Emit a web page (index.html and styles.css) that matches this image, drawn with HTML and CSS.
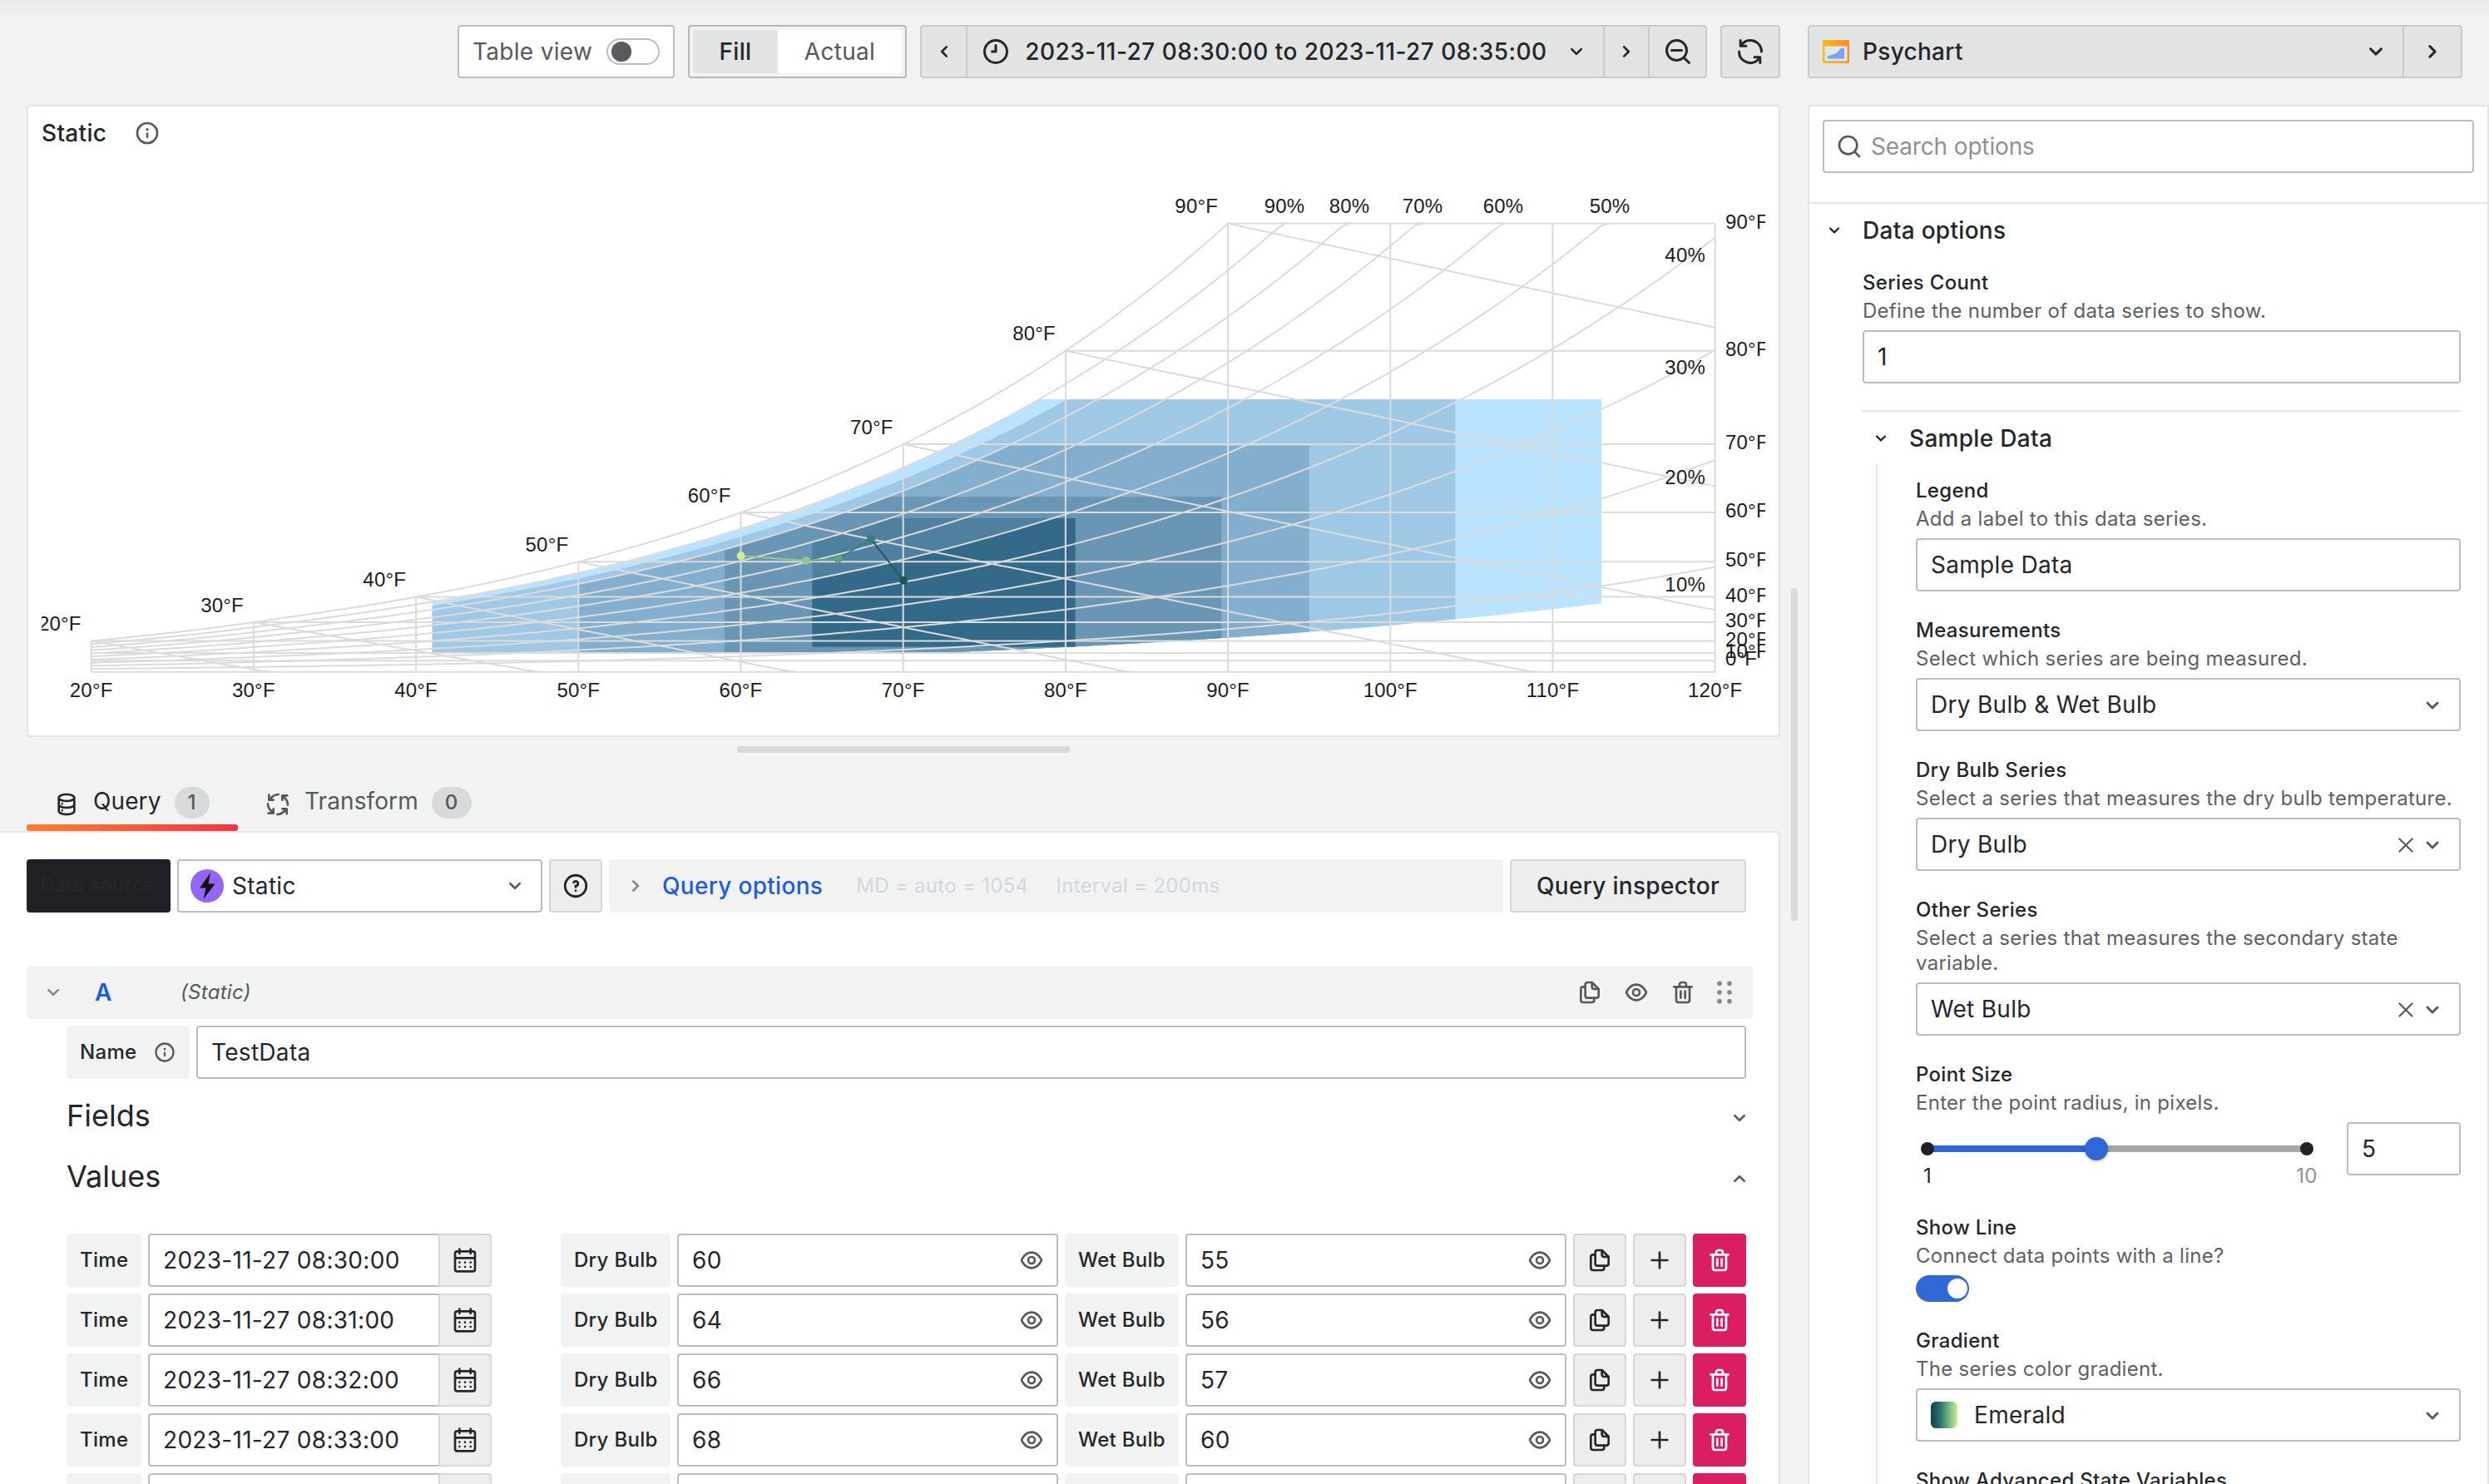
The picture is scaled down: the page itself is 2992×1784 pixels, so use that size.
FILE: index.html
```html
<!DOCTYPE html>
<html lang="en">
<head>
<meta charset="utf-8">
<title>Edit panel</title>
<link rel="stylesheet" href="styles.css">
</head>
<body>
<svg class="sprite" aria-hidden="true">
  <symbol id="down" viewBox="0 0 24 24"><path d="M17,9.17a1,1,0,0,0-1.41,0L12,12.71,8.46,9.17a1,1,0,0,0-1.41,0,1,1,0,0,0,0,1.42l4.24,4.24a1,1,0,0,0,1.42,0L17,10.59A1,1,0,0,0,17,9.17Z"/></symbol>
  <symbol id="right" viewBox="0 0 24 24"><path d="M14.83,11.29,10.59,7.05a1,1,0,0,0-1.42,0,1,1,0,0,0,0,1.41L12.71,12,9.17,15.54a1,1,0,0,0,0,1.41,1,1,0,0,0,.71.29,1,1,0,0,0,.71-.29l4.24-4.24A1,1,0,0,0,14.83,11.29Z"/></symbol>
  <symbol id="info" viewBox="0 0 24 24"><path d="M12,2A10,10,0,1,0,22,12,10,10,0,0,0,12,2Zm0,18a8,8,0,1,1,8-8A8,8,0,0,1,12,20Zm0-8.5a1,1,0,0,0-1,1v3a1,1,0,0,0,2,0v-3A1,1,0,0,0,12,11.5Zm0-4a1.25,1.25,0,1,0,1.25,1.25A1.25,1.25,0,0,0,12,7.5Z"/></symbol>
  <symbol id="clock" viewBox="0 0 24 24"><path d="M12,6a1,1,0,0,0-1,1v4H9a1,1,0,0,0,0,2h3a1,1,0,0,0,1-1V7A1,1,0,0,0,12,6Zm0-4A10,10,0,1,0,22,12,10,10,0,0,0,12,2Zm0,18a8,8,0,1,1,8-8A8,8,0,0,1,12,20Z"/></symbol>
  <symbol id="zoomout" viewBox="0 0 24 24"><path d="M21.71,20.29,18,16.61A9,9,0,1,0,16.61,18l3.68,3.68a1,1,0,0,0,1.42,0A1,1,0,0,0,21.71,20.29ZM11,18a7,7,0,1,1,7-7A7,7,0,0,1,11,18Zm4-8H7a1,1,0,0,0,0,2h8a1,1,0,0,0,0-2Z"/></symbol>
  <symbol id="search" viewBox="0 0 24 24"><path d="M21.71,20.29,18,16.61A9,9,0,1,0,16.61,18l3.68,3.68a1,1,0,0,0,1.42,0A1,1,0,0,0,21.71,20.29ZM11,18a7,7,0,1,1,7-7A7,7,0,0,1,11,18Z"/></symbol>
  <symbol id="sync" viewBox="0 0 24 24"><path d="M19.91,15.51H15.38a1,1,0,0,0,0,2h2.4A8,8,0,0,1,4,12a1,1,0,1,0-2,0,10,10,0,0,0,16.88,7.23V21a1,1,0,0,0,2,0V16.5A1,1,0,0,0,19.91,15.51ZM12,2A10,10,0,0,0,5.12,4.77V3a1,1,0,0,0-2,0V7.5a1,1,0,0,0,1,1h4.5a1,1,0,0,0,0-2H6.22A8,8,0,0,1,20,12a1,1,0,0,0,2,0A10,10,0,0,0,12,2Z"/></symbol>
  <symbol id="copy" viewBox="0 0 24 24"><path d="M21,8.94a1.31,1.31,0,0,0-.06-.27l0-.09a1.07,1.07,0,0,0-.19-.28h0l-6-6h0a1.07,1.07,0,0,0-.28-.19.32.32,0,0,0-.09,0A.88.88,0,0,0,14.05,2H10A3,3,0,0,0,7,5V6H6A3,3,0,0,0,3,9V19a3,3,0,0,0,3,3h8a3,3,0,0,0,3-3V18h1a3,3,0,0,0,3-3V9S21,9,21,8.94ZM15,5.41,17.59,8H16a1,1,0,0,1-1-1ZM15,19a1,1,0,0,1-1,1H6a1,1,0,0,1-1-1V9A1,1,0,0,1,6,8H7v7a3,3,0,0,0,3,3h5Zm4-4a1,1,0,0,1-1,1H10a1,1,0,0,1-1-1V5a1,1,0,0,1,1-1h3V7a3,3,0,0,0,3,3h3Z"/></symbol>
  <symbol id="eye" viewBox="0 0 24 24"><path d="M21.92,11.6C19.9,6.91,16.1,4,12,4S4.1,6.91,2.08,11.6a1,1,0,0,0,0,.8C4.1,17.09,7.9,20,12,20s7.9-2.91,9.92-7.6A1,1,0,0,0,21.92,11.6ZM12,18c-3.17,0-6.17-2.29-7.9-6C5.83,8.29,8.83,6,12,6s6.17,2.29,7.9,6C18.17,15.71,15.17,18,12,18ZM12,8a4,4,0,1,0,4,4A4,4,0,0,0,12,8Zm0,6a2,2,0,1,1,2-2A2,2,0,0,1,12,14Z"/></symbol>
  <symbol id="trash" viewBox="0 0 24 24"><path d="M10,18a1,1,0,0,0,1-1V11a1,1,0,0,0-2,0v6A1,1,0,0,0,10,18ZM20,6H16V5a3,3,0,0,0-3-3H11A3,3,0,0,0,8,5V6H4A1,1,0,0,0,4,8H5V19a3,3,0,0,0,3,3h8a3,3,0,0,0,3-3V8h1a1,1,0,0,0,0-2ZM10,5a1,1,0,0,1,1-1h2a1,1,0,0,1,1,1V6H10Zm7,14a1,1,0,0,1-1,1H8a1,1,0,0,1-1-1V8H17Zm-3-1a1,1,0,0,0,1-1V11a1,1,0,0,0-2,0v6A1,1,0,0,0,14,18Z"/></symbol>
  <symbol id="plus" viewBox="0 0 24 24"><path d="M19,11H13V5a1,1,0,0,0-2,0v6H5a1,1,0,0,0,0,2h6v6a1,1,0,0,0,2,0V13h6a1,1,0,0,0,0-2Z"/></symbol>
  <symbol id="calendar" viewBox="0 0 24 24"><path d="M12,19a1,1,0,1,0-1-1A1,1,0,0,0,12,19Zm5,0a1,1,0,1,0-1-1A1,1,0,0,0,17,19Zm0-4a1,1,0,1,0-1-1A1,1,0,0,0,17,15Zm-5,0a1,1,0,1,0-1-1A1,1,0,0,0,12,15ZM19,3H18V2a1,1,0,0,0-2,0V3H8V2A1,1,0,0,0,6,2V3H5A3,3,0,0,0,2,6V20a3,3,0,0,0,3,3H19a3,3,0,0,0,3-3V6A3,3,0,0,0,19,3Zm1,17a1,1,0,0,1-1,1H5a1,1,0,0,1-1-1V11H20ZM20,9H4V6A1,1,0,0,1,5,5H6V6A1,1,0,0,0,8,6V5h8V6a1,1,0,0,0,2,0V5h1a1,1,0,0,1,1,1ZM7,15a1,1,0,1,0-1-1A1,1,0,0,0,7,15Zm0,4a1,1,0,1,0-1-1A1,1,0,0,0,7,19Z"/></symbol>
  <symbol id="help" viewBox="0 0 24 24"><path d="M11.29,15.29a1.58,1.58,0,0,0-.12.15.76.76,0,0,0-.09.18.64.64,0,0,0-.06.18,1.36,1.36,0,0,0,0,.2.84.84,0,0,0,.08.38.9.9,0,0,0,.54.54.94.94,0,0,0,.76,0,.9.9,0,0,0,.54-.54A1,1,0,0,0,13,16a1,1,0,0,0-.29-.71A1,1,0,0,0,11.29,15.29ZM12,2A10,10,0,1,0,22,12,10,10,0,0,0,12,2Zm0,18a8,8,0,1,1,8-8A8,8,0,0,1,12,20ZM12,7A3,3,0,0,0,9.4,8.5a1,1,0,1,0,1.73,1A1,1,0,0,1,12,9a1,1,0,0,1,0,2,1,1,0,0,0-1,1v1a1,1,0,0,0,2,0v-.18A3,3,0,0,0,12,7Z"/></symbol>
  <symbol id="times" viewBox="0 0 24 24"><path d="M13.41,12l6.3-6.29a1,1,0,1,0-1.42-1.42L12,10.59,5.71,4.29A1,1,0,0,0,4.29,5.71L10.59,12l-6.3,6.29a1,1,0,0,0,0,1.42,1,1,0,0,0,1.42,0L12,13.41l6.29,6.3a1,1,0,0,0,1.42,0,1,1,0,0,0,0-1.42Z"/></symbol>
  <symbol id="database" viewBox="0 0 24 24"><path d="M8,16.5a1,1,0,1,0,1,1A1,1,0,0,0,8,16.5ZM12,2C8,2,4,3.37,4,6V18c0,2.63,4,4,8,4s8-1.37,8-4V6C20,3.37,16,2,12,2Zm6,16c0,.71-2.28,2-6,2s-6-1.29-6-2V14.73A13.16,13.16,0,0,0,12,16a13.16,13.16,0,0,0,6-1.27Zm0-6c0,.71-2.28,2-6,2s-6-1.29-6-2V8.73A13.16,13.16,0,0,0,12,10a13.16,13.16,0,0,0,6-1.27ZM12,8C8.28,8,6,6.71,6,6s2.28-2,6-2,6,1.29,6,2S15.72,8,12,8ZM8,10.5a1,1,0,1,0,1,1A1,1,0,0,0,8,10.5Z"/></symbol>
  <symbol id="process" viewBox="0 0 24 24"><g fill="none" stroke="currentColor" stroke-width="2" stroke-linecap="round" stroke-linejoin="round"><path d="M12.500 3C9.500 3.100 7 4.600 5 7.200M4 3.500V8H8"/><path transform="rotate(90 12 12)" d="M12.500 3C9.500 3.100 7 4.600 5 7.200M4 3.500V8H8"/><path transform="rotate(180 12 12)" d="M12.500 3C9.500 3.100 7 4.600 5 7.200M4 3.500V8H8"/><path transform="rotate(270 12 12)" d="M12.500 3C9.500 3.100 7 4.600 5 7.200M4 3.500V8H8"/></g></symbol>
  <symbol id="grip" viewBox="0 0 24 24"><circle cx="7.5" cy="4" r="2.1"/><circle cx="16.5" cy="4" r="2.1"/><circle cx="7.5" cy="12" r="2.1"/><circle cx="16.5" cy="12" r="2.1"/><circle cx="7.5" cy="20" r="2.1"/><circle cx="16.5" cy="20" r="2.1"/></symbol>
</svg>

<div class="top-shadow"></div>
<div class="page">
  <main class="left">
    <div class="toolbar">
      <div class="table-view"><span>Table view</span><span class="switch-off"><i></i></span></div>
      <div class="radio"><span class="on">Fill</span><span class="off">Actual</span></div>
      <div class="btn-group">
        <div class="seg seg-prev"><svg class="i32 flip"><use href="#right"/></svg></div>
        <div class="seg seg-time"><svg class="i36"><use href="#clock"/></svg><span>2023-11-27 08:30:00 to 2023-11-27 08:35:00</span><svg class="i32"><use href="#down"/></svg></div>
        <div class="seg seg-next"><svg class="i32"><use href="#right"/></svg></div>
        <div class="seg seg-zoom"><svg class="i36"><use href="#zoomout"/></svg></div>
      </div>
      <div class="btn-group refresh"><svg class="i36"><use href="#sync"/></svg></div>
    </div>

    <section class="panel">
      <header class="panel-title"><h2>Static</h2><svg class="i32"><use href="#info"/></svg></header>
      <svg class="chart" id="chart" viewBox="50 194 2072 690" width="2072" height="690"></svg>
    </section>

    <div class="splitter"><span></span></div>

    <nav class="tabs">
      <div class="tab active"><svg class="i32"><use href="#database"/></svg><span>Query</span><b>1</b></div>
      <div class="tab"><svg class="i32"><use href="#process"/></svg><span>Transform</span><b>0</b></div>
    </nav>

    <section class="query">
      <div class="source-row">
        <div class="source-label">Data source</div>
        <div class="source-select">
          <svg class="bolt" viewBox="0 0 40 40"><circle cx="20" cy="20" r="20" fill="#9466f8"/><path d="M24 4 11 22.5h7.5L15.5 36 29.500 17.500H21.500Z" fill="#111217"/></svg>
          <span>Static</span><svg class="i32 muted"><use href="#down"/></svg>
        </div>
        <div class="sq"><svg class="i34"><use href="#help"/></svg></div>
        <div class="query-options"><svg class="i32 faint"><use href="#right"/></svg><a>Query options</a><small class="md">MD = auto = 1054</small><small>Interval = 200ms</small></div>
        <div class="inspector">Query inspector</div>
      </div>

      <div class="query-head">
        <svg class="i32 faint"><use href="#down"/></svg><b>A</b><em>(Static)</em>
        <div class="actions"><svg class="i32"><use href="#copy"/></svg><svg class="i32"><use href="#eye"/></svg><svg class="i32"><use href="#trash"/></svg><svg class="i32 grip"><use href="#grip"/></svg></div>
      </div>

      <div class="query-body">
        <div class="name-row"><div class="tag tag-name">Name<svg class="i28"><use href="#info"/></svg></div><div class="input grow">TestData</div></div>
        <div class="fold"><h3>Fields</h3><svg class="i32"><use href="#down"/></svg></div>
        <div class="fold fold-values"><h3>Values</h3><svg class="i32 up"><use href="#down"/></svg></div>
        <div class="rows">
          <div class="row"><div class="tag tag-time">Time</div><div class="input time">2023-11-27 08:30:00</div><div class="sq cal"><svg class="i32"><use href="#calendar"/></svg></div><div class="tag tag-dry">Dry Bulb</div><div class="input val">60<svg class="i32"><use href="#eye"/></svg></div><div class="tag tag-wet">Wet Bulb</div><div class="input val">55<svg class="i32"><use href="#eye"/></svg></div><div class="sq"><svg class="i32"><use href="#copy"/></svg></div><div class="sq"><svg class="i32"><use href="#plus"/></svg></div><div class="sq danger"><svg class="i32"><use href="#trash"/></svg></div></div>
          <div class="row"><div class="tag tag-time">Time</div><div class="input time">2023-11-27 08:31:00</div><div class="sq cal"><svg class="i32"><use href="#calendar"/></svg></div><div class="tag tag-dry">Dry Bulb</div><div class="input val">64<svg class="i32"><use href="#eye"/></svg></div><div class="tag tag-wet">Wet Bulb</div><div class="input val">56<svg class="i32"><use href="#eye"/></svg></div><div class="sq"><svg class="i32"><use href="#copy"/></svg></div><div class="sq"><svg class="i32"><use href="#plus"/></svg></div><div class="sq danger"><svg class="i32"><use href="#trash"/></svg></div></div>
          <div class="row"><div class="tag tag-time">Time</div><div class="input time">2023-11-27 08:32:00</div><div class="sq cal"><svg class="i32"><use href="#calendar"/></svg></div><div class="tag tag-dry">Dry Bulb</div><div class="input val">66<svg class="i32"><use href="#eye"/></svg></div><div class="tag tag-wet">Wet Bulb</div><div class="input val">57<svg class="i32"><use href="#eye"/></svg></div><div class="sq"><svg class="i32"><use href="#copy"/></svg></div><div class="sq"><svg class="i32"><use href="#plus"/></svg></div><div class="sq danger"><svg class="i32"><use href="#trash"/></svg></div></div>
          <div class="row"><div class="tag tag-time">Time</div><div class="input time">2023-11-27 08:33:00</div><div class="sq cal"><svg class="i32"><use href="#calendar"/></svg></div><div class="tag tag-dry">Dry Bulb</div><div class="input val">68<svg class="i32"><use href="#eye"/></svg></div><div class="tag tag-wet">Wet Bulb</div><div class="input val">60<svg class="i32"><use href="#eye"/></svg></div><div class="sq"><svg class="i32"><use href="#copy"/></svg></div><div class="sq"><svg class="i32"><use href="#plus"/></svg></div><div class="sq danger"><svg class="i32"><use href="#trash"/></svg></div></div>
          <div class="row"><div class="tag tag-time"></div><div class="input time"></div><div class="sq cal"></div><div class="tag tag-dry"></div><div class="input val"></div><div class="tag tag-wet"></div><div class="input val"></div><div class="sq"></div><div class="sq"></div><div class="sq danger"></div></div>
        </div>
      </div>
    </section>
  </main>

  <div class="gutter"><span></span></div>

  <aside class="right">
    <div class="viz-picker">
      <div class="viz-name">
        <svg class="viz-icon" viewBox="0 0 32 28"><defs><linearGradient id="og"><stop offset="0" stop-color="#f2c015"/><stop offset="1" stop-color="#ff8b2b"/></linearGradient></defs><rect width="32" height="28" rx="1.500" fill="url(#og)"/><path d="M2.500 7.500h27v18h-27Z" fill="#e3e5e8"/><path d="M5.500 22.500v-3C14 18 19 15 21.500 10h4.500v12.500Z" fill="#79a6f2"/></svg>
        <span>Psychart</span><svg class="i36"><use href="#down"/></svg>
      </div>
      <div class="viz-next"><svg class="i36"><use href="#right"/></svg></div>
    </div>
    <div class="options">
      <div class="search-wrap"><div class="search"><svg class="i32"><use href="#search"/></svg><span>Search options</span></div></div>
      <div class="category"><svg class="i28"><use href="#down"/></svg><h4>Data options</h4></div>
      <div class="field field-count"><label>Series Count</label><p>Define the number of data series to show.</p><div class="input">1</div></div>
      <div class="nested">
        <div class="category sub"><svg class="i28"><use href="#down"/></svg><h4>Sample Data</h4></div>
        <div class="nested-body">
          <div class="field"><label>Legend</label><p>Add a label to this data series.</p><div class="input">Sample Data</div></div>
          <div class="field"><label>Measurements</label><p>Select which series are being measured.</p><div class="input">Dry Bulb &amp; Wet Bulb<svg class="i34 chev"><use href="#down"/></svg></div></div>
          <div class="field"><label>Dry Bulb Series</label><p>Select a series that measures the dry bulb temperature.</p><div class="input">Dry Bulb<svg class="i26"><use href="#times"/></svg><svg class="i34 chev"><use href="#down"/></svg></div></div>
          <div class="field"><label>Other Series</label><p>Select a series that measures the secondary state variable.</p><div class="input">Wet Bulb<svg class="i26"><use href="#times"/></svg><svg class="i34 chev"><use href="#down"/></svg></div></div>
          <div class="field"><label>Point Size</label><p>Enter the point radius, in pixels.</p>
            <div class="slider-row">
              <svg class="slider" width="488" height="80" viewBox="0 0 488 80"><rect x="14" y="28" width="456" height="8" rx="4" fill="#a6a7a9"/><rect x="14" y="28" width="204" height="8" fill="#3267d6"/><circle cx="14" cy="32" r="8" fill="#202226"/><circle cx="470" cy="32" r="8" fill="#202226"/><circle class="handle" cx="217" cy="32" r="14" fill="#3267d6"/><text x="14" y="73" fill="#24262b">1</text><text x="470" y="73" fill="#8f9194">10</text></svg>
              <div class="input size">5</div>
            </div>
          </div>
          <div class="field"><label>Show Line</label><p>Connect data points with a line?</p><div class="switch-on"><i></i></div></div>
          <div class="field"><label>Gradient</label><p>The series color gradient.</p><div class="input"><span class="swatch"></span>Emerald<svg class="i34 chev"><use href="#down"/></svg></div></div>
          <div class="field"><label>Show Advanced State Variables</label></div>
        </div>
      </div>
    </div>
  </aside>
</div>
<script src="chart.js"></script>
</body>
</html>
```
FILE: styles.css
```css
* { box-sizing: border-box; }
html, body { margin: 0; width: 2992px; height: 1784px; overflow: hidden; }
body {
  background: #f1f3f3;
  color: #24262b;
  font: 400 28px/44px Inter, "Liberation Sans", sans-serif;
  letter-spacing: 0.3px;
}
h2, h3, h4, p { margin: 0; font-weight: 500; }
svg { display: block; flex: none; fill: currentColor; }
.sprite { position: absolute; width: 0; height: 0; }
.i26 { width: 26px; height: 26px; }
.i28 { width: 28px; height: 28px; }
.i32 { width: 32px; height: 32px; }
.i34 { width: 34px; height: 34px; }
.i36 { width: 36px; height: 36px; }
.flip { transform: scaleX(-1); }
.up { transform: scaleY(-1); }
.muted { color: #55585c; }
.faint { color: #85878b; }

.top-shadow {
  position: absolute;
  inset: 0 0 auto;
  height: 24px;
  background: linear-gradient(#e8eaea, #eceeee 35%, #f1f3f3);
}
.page {
  position: relative;
  display: grid;
  grid-template-columns: 2140px 33px 819px;
  height: 1784px;
}
.left { display: flex; flex-direction: column; min-width: 0; }

/* toolbar */
.toolbar {
  display: flex;
  justify-content: flex-end;
  gap: 16px;
  height: 126px;
  padding-top: 30px;
  flex: none;
}
.toolbar > div { height: 64px; border-radius: 4px; display: flex; align-items: center; }
.table-view {
  width: 261px;
  padding: 0 16px;
  justify-content: space-between;
  background: #fff;
  border: 2px solid #bcbdbd;
  color: #55585c;
}
.switch-off { width: 64px; height: 32px; border: 2px solid #bcbdbd; border-radius: 16px; padding: 2px 4px; background: #fff; }
.switch-off i { display: block; width: 24px; height: 24px; border-radius: 50%; background: #575a5e; box-shadow: 0 1px 2px #0003; }
.radio { width: 263px; padding: 4px; border: 2px solid #b6b7b7; }
.radio span { height: 52px; line-height: 52px; text-align: center; border-radius: 3px; }
.radio .on { width: 102px; background: #e2e4e4; font-weight: 500; }
.radio .off { flex: 1; background: #fff; color: #55585c; }
.btn-group, .viz-picker { background: #e2e4e4; border: 2px solid #c9cbcb; font-weight: 500; }
.seg { height: 60px; display: flex; align-items: center; justify-content: center; border-right: 2px solid #c9cbcb; }
.seg-prev { width: 55px; }
.seg-time { width: 766px; padding: 0 16px; justify-content: space-between; }
.seg-time span { letter-spacing: 0.47px; position: relative; left: -1px; }
.seg-next { width: 54px; }
.seg-zoom { width: 67px; border-right: 0; }
.refresh { width: 72px; justify-content: center; }

/* visualization panel */
.panel {
  flex: none;
  margin-left: 32px;
  height: 760px;
  background: #fff;
  border: 2px solid #e3e5e5;
  border-radius: 4px;
}
.panel-title { display: flex; align-items: center; height: 66px; padding: 0 0 2px 16px; gap: 33px; }
.panel-title svg { color: #55585c; }
.panel-title h2 { font-size: 28px; }
.chart { margin-left: 16px; }
.chart text { font: 24px "Liberation Sans", sans-serif; letter-spacing: 0.2px; fill: #1c1c1c; }

.splitter { height: 50px; padding: 11px 0 0 854px; flex: none; margin-left: 32px; }
.splitter span { display: block; width: 400px; height: 8px; border-radius: 3px; background: #d7d9da; }

/* tabs */
.tabs { display: flex; height: 63px; padding-left: 32px; flex: none; }
.tab { display: flex; align-items: center; height: 63px; padding: 0 33px 4px 32px; gap: 16px; color: #55585c; position: relative; }
.tab svg { position: relative; top: 1px; }
.tab span { position: relative; top: -3px; letter-spacing: 0.1px; }
.tab b { height: 38px; line-height: 38px; padding: 0 16px; border-radius: 19px; background: #d7d9da; font-size: 24px; font-weight: 500; color: #55585c; position: relative; top: -1px; }
.tab.active { width: 254px; padding-right: 0; color: #24262b; }
.tab.active::after { content: ""; position: absolute; left: 0; right: 0; bottom: 0; height: 8px; border-radius: 3px; background: linear-gradient(90deg, #ff8030, #f23545); }

/* query editor */
.query {
  flex: 1;
  min-height: 0;
  background: #fff;
  border: 2px solid #e3e5e5;
  border-width: 2px 2px 0 0;
  border-radius: 0 5px 0 0;
  padding: 32px 32px 0;
}
.source-row { display: flex; gap: 8px; height: 64px; width: 2067px; }
.source-label { width: 173px; padding-left: 16px; line-height: 62px; border-radius: 4px; background: #202127; color: #25262c; font-size: 24px; font-weight: 500; white-space: nowrap; letter-spacing: 0; }
.source-select { width: 439px; display: flex; align-items: center; border: 2px solid #bcbdbd; border-radius: 4px; padding: 0 15px 0 14px; }
.source-select span { flex: 1; margin-left: 10px; }
.bolt { width: 40px; height: 40px; }
.sq { width: 64px; height: 64px; flex: none; display: flex; align-items: center; justify-content: center; background: #ededee; border: 2px solid #d5d6d7; border-radius: 4px; }
.query-options { flex: 1; display: flex; align-items: center; padding-left: 16px; background: #f1f3f3; border-radius: 4px; }
.query-options a { color: #1f5bdb; font-weight: 500; margin-left: 16px; }
.query-options small { font-size: 24px; color: #d4d5e2; margin-left: 33px; letter-spacing: 0.3px; }
.query-options .md { margin-left: 40px; }
.inspector { width: 284px; text-align: center; line-height: 60px; background: #ededee; border: 2px solid #d5d6d7; border-radius: 4px; font-weight: 500; }
.query-head { display: flex; align-items: center; width: 2075px; height: 64px; margin-top: 64px; padding: 0 18px 0 16px; background: #f1f3f3; border-radius: 4px; }
.query-head b { width: 103px; margin-left: 34px; color: #1f5bdb; font-weight: 600; }
.query-head em { font-size: 24px; color: #55585c; }
.actions { display: flex; gap: 24px; margin-left: auto; color: #55585c; }
.actions .grip { color: #85878b; margin-left: -6px; }
.query-body { width: 2019px; margin: 8px 0 0 48px; }
.name-row { display: flex; gap: 8px; }
.tag { height: 64px; flex: none; padding: 0 16px; background: #f1f3f3; border-radius: 4px; font-size: 24px; font-weight: 500; line-height: 64px; white-space: nowrap; }
.tag-name { width: 148px; display: flex; align-items: center; justify-content: space-between; line-height: 62px; }
.tag-name svg { color: #55585c; }
.input { height: 64px; border: 2px solid #bcbdbd; border-radius: 4px; background: #fff; padding: 0 16px; display: flex; align-items: center; }
.grow { flex: 1; }
.fold { display: flex; justify-content: space-between; align-items: center; height: 44px; margin: 22px -8px 0 0; color: #55585c; }
.fold svg { position: relative; top: 3px; }
.fold h3 { font-size: 36px; font-weight: 400; color: #24262b; letter-spacing: 0; }
.fold-values { margin-top: 29px; }
.rows { margin-top: 47px; display: flex; flex-direction: column; gap: 8px; }
.row { display: flex; gap: 8px; }
.tag-time { width: 90px; }
.tag-dry { width: 132px; }
.tag-wet { width: 137px; }
.time { width: 350px; border-radius: 4px 0 0 4px; border-right: 0; }
.cal { margin: 0 75px 0 -9px; border-radius: 0 4px 4px 0; }
.val { width: 458px; justify-content: space-between; padding-right: 14px; }
.val svg { color: #55585c; }
.danger { background: #db1e64; border-color: #db1e64; color: #fff; }

.gutter { padding: 707px 0 0 13px; }
.gutter span { display: block; width: 8px; height: 400px; border-radius: 4px; background: #d9dbdb; }

/* options pane */
.right { display: flex; flex-direction: column; min-width: 0; }
.viz-picker { display: flex; width: 787px; height: 64px; margin: 30px 0 32px; border-radius: 4px; flex: none; }
.viz-name { flex: 1; display: flex; align-items: center; padding: 0 14px 0 16px; }
.viz-name span { flex: 1; margin-left: 16px; }
.viz-icon { width: 32px; height: 28px; }
.viz-next { width: 70px; display: flex; align-items: center; justify-content: center; border-left: 2px solid #c9cbcb; }
.options { flex: 1; min-height: 0; background: #fff; border: 2px solid #e3e5e5; border-bottom: 0; border-radius: 4px 0 0 0; }
.search-wrap { height: 117px; padding: 16px; border-bottom: 2px solid #e3e5e5; }
.search { width: 783px; height: 64px; display: flex; align-items: center; gap: 10px; padding-left: 14px; border: 2px solid #bcbdbd; border-radius: 4px; color: #55585c; }
.search span { color: #8f9194; letter-spacing: -0.15px; }
.category { display: flex; align-items: center; gap: 20px; height: 64px; padding: 0 0 0 16px; }
.category h4 { font-size: 28px; }
.field { margin-bottom: 31px; font-size: 28px; }
.field label { display: block; font-size: 24px; line-height: 32px; height: 30px; font-weight: 500; }
.field p { position: relative; top: 1px; margin: 4px 0 9px; font-size: 24px; line-height: 30px; font-weight: 400; color: #5d6064; letter-spacing: 0.28px; }
.field-count { margin: 15px 32px 32px 64px; }
.nested { margin: 0 32px 0 64px; border-top: 2px solid #e3e5e5; }
.sub { padding-left: 8px; }
.nested-body { margin-left: 16px; border-left: 2px solid #e3e5e5; padding: 15px 0 0 46px; }
.chev { margin-left: auto; margin-right: -1px; color: #55585c; position: relative; top: 1px; }
.i26 { margin-left: auto; color: #55585c; position: relative; top: 1px; }
.i26 + .chev { margin-left: 2px; }
.slider-row { display: flex; justify-content: space-between; height: 80px; }
.slider text { font: 24px Inter, sans-serif; text-anchor: middle; }
.handle { filter: drop-shadow(0 1px 2px #0004); }
.size { width: 137px; }
.switch-on { width: 64px; height: 32px; border-radius: 16px; padding: 4px; background: #3267d6; }
.switch-on i { display: block; width: 24px; height: 24px; margin-left: auto; margin-right: -2px; border-radius: 50%; background: #fff; }
.swatch { width: 32px; height: 32px; margin: 0 20px 0 0; border-radius: 6px; background: linear-gradient(90deg, #123f4e, #2e7268 35%, #6bb080 65%, #ccee8f); }
```
FILE: chart.js
```js
// Psychrometric chart in IP units at sea level: dry bulb across, humidity ratio up.
const P = 14.696;
const satPressure = f => {
  const T = f + 459.67;
  const ln = f < 32
    ? -1.0214165e4 / T - 4.8932428 - 5.3765794e-3 * T + 1.9202377e-7 * T * T + 3.5575832e-10 * T ** 3 - 9.0344688e-14 * T ** 4 + 4.1635019 * Math.log(T)
    : -1.0440397e4 / T - 11.29465 - 2.7022355e-2 * T + 1.289036e-5 * T * T - 2.4780681e-9 * T ** 3 + 6.5459673 * Math.log(T);
  return Math.exp(ln);
};
const ratio = (f, rh = 1) => { const p = rh * satPressure(f); return 0.621945 * p / (P - p); };
const wetBulb = (db, wb) => wb >= 32
  ? ((1093 - 0.556 * wb) * ratio(wb) - 0.24 * (db - wb)) / (1093 + 0.444 * db - wb)
  : ((1220 - 0.04 * wb) * ratio(wb) - 0.24 * (db - wb)) / (1220 + 0.444 * db - 0.48 * wb);

const W_MAX = ratio(90);
const X = f => 109.7 + 19.52 * (f - 20);
const Y = w => 807.8 - 539.2 * w / W_MAX;
const out = [];
const path = (pts, attrs) => out.push(`<path d="M${pts.map(p => p[0].toFixed(1) + ' ' + p[1].toFixed(1)).join('L')}" ${attrs}/>`);
const grid = pts => path(pts, 'fill="none" stroke="#dbdbdb" stroke-width="2"');
const label = (x, y, s, anchor = 'start') => out.push(`<text x="${x}" y="${y}" text-anchor="${anchor}">${s}</text>`);

// Envelope: dry bulb range, relative humidity range, dew point range.
const zone = (t0, t1, rh0, rh1, dp0, dp1, color) => {
  const lo = [], hi = [];
  const n = 150;
  for (let i = 0; i <= n; i++) {
    const t = t0 + (t1 - t0) * i / n;
    lo.unshift([X(t), Y(Math.max(ratio(t, rh0), ratio(dp0)))]);
    hi.push([X(t), Y(Math.max(Math.min(ratio(t, rh1), ratio(dp1)), ratio(dp0)))]);
  }
  path([...hi, ...lo], `fill="${color}"`);
};
zone(41, 113, 0.08, 0.9, 10.4, 75.2, '#bae3ff');
zone(41, 104, 0.08, 0.85, 10.4, 75.2, '#9ec8e6');
zone(50, 95, 0.08, 0.8, 10.4, 69.8, '#84aecd');
zone(59, 89.6, 0.08, 0.8, 10.4, 62.6, '#6a96b6');
zone(64.4, 80.6, 0.08, 0.7, 15.8, 59, '#4f80a0');
zone(64.4, 80.6, 0.08, 0.5, 15.8, 59, '#336a8a');

for (let t = 20; t <= 120; t += 10) {
  grid([[X(t), Y(0)], [X(t), Y(Math.min(ratio(t), W_MAX))]]);
  label(X(t), 838, t + '°F', 'middle');
}
grid([[X(20), Y(0)], [X(120), Y(0)]]);
for (let t = 0; t <= 90; t += 10) {
  grid([[X(Math.max(t, 20)), Y(ratio(t))], [X(120), Y(ratio(t))]]);
  label(2074, (Y(ratio(t)) + 6).toFixed(1), t + '°F');
}
for (let r = 1; r <= 10; r++) {
  const pts = [];
  for (let t = 20; t <= 120; t += 0.5) {
    const w = ratio(t, r / 10);
    pts.push([X(t), Y(Math.min(w, W_MAX))]);
    if (w >= W_MAX) break;
  }
  grid(pts);
}
for (let wb = 20; wb <= 90; wb += 10) {
  const pts = [];
  for (let t = wb; t <= 120; t += 0.5) {
    const w = wetBulb(t, wb);
    pts.push([X(t), Y(Math.max(w, 0))]);
    if (w <= 0) break;
  }
  grid(pts);
  label((X(wb) - 12).toFixed(1), (Y(ratio(wb)) - 12.6).toFixed(1), wb + '°F', 'end');
}
[[1544, 90], [1622, 80], [1710, 70], [1807, 60], [1935, 50]].forEach(([x, r]) => label(x, 256, r + '%', 'middle'));
[[315.3, 40], [450, 30], [582, 20], [711, 10]].forEach(([y, r]) => label(2050, y, r + '%', 'end'));

const points = [[890.7, 668.2], [969, 674], [1007.7, 672], [1047, 648], [1086, 697.8]];
['#92c98a', '#62a782', '#3a8273', '#205a5c'].forEach((c, i) =>
  path([points[i], points[i + 1]], `fill="none" stroke="${c}" stroke-width="2"`));
['#cfee90', '#92c98a', '#5ba381', '#35806e', '#1d5558'].forEach((c, i) =>
  out.push(`<circle cx="${points[i][0]}" cy="${points[i][1]}" r="5" fill="${c}"/>`));
document.getElementById('chart').innerHTML = out.join('');
```
